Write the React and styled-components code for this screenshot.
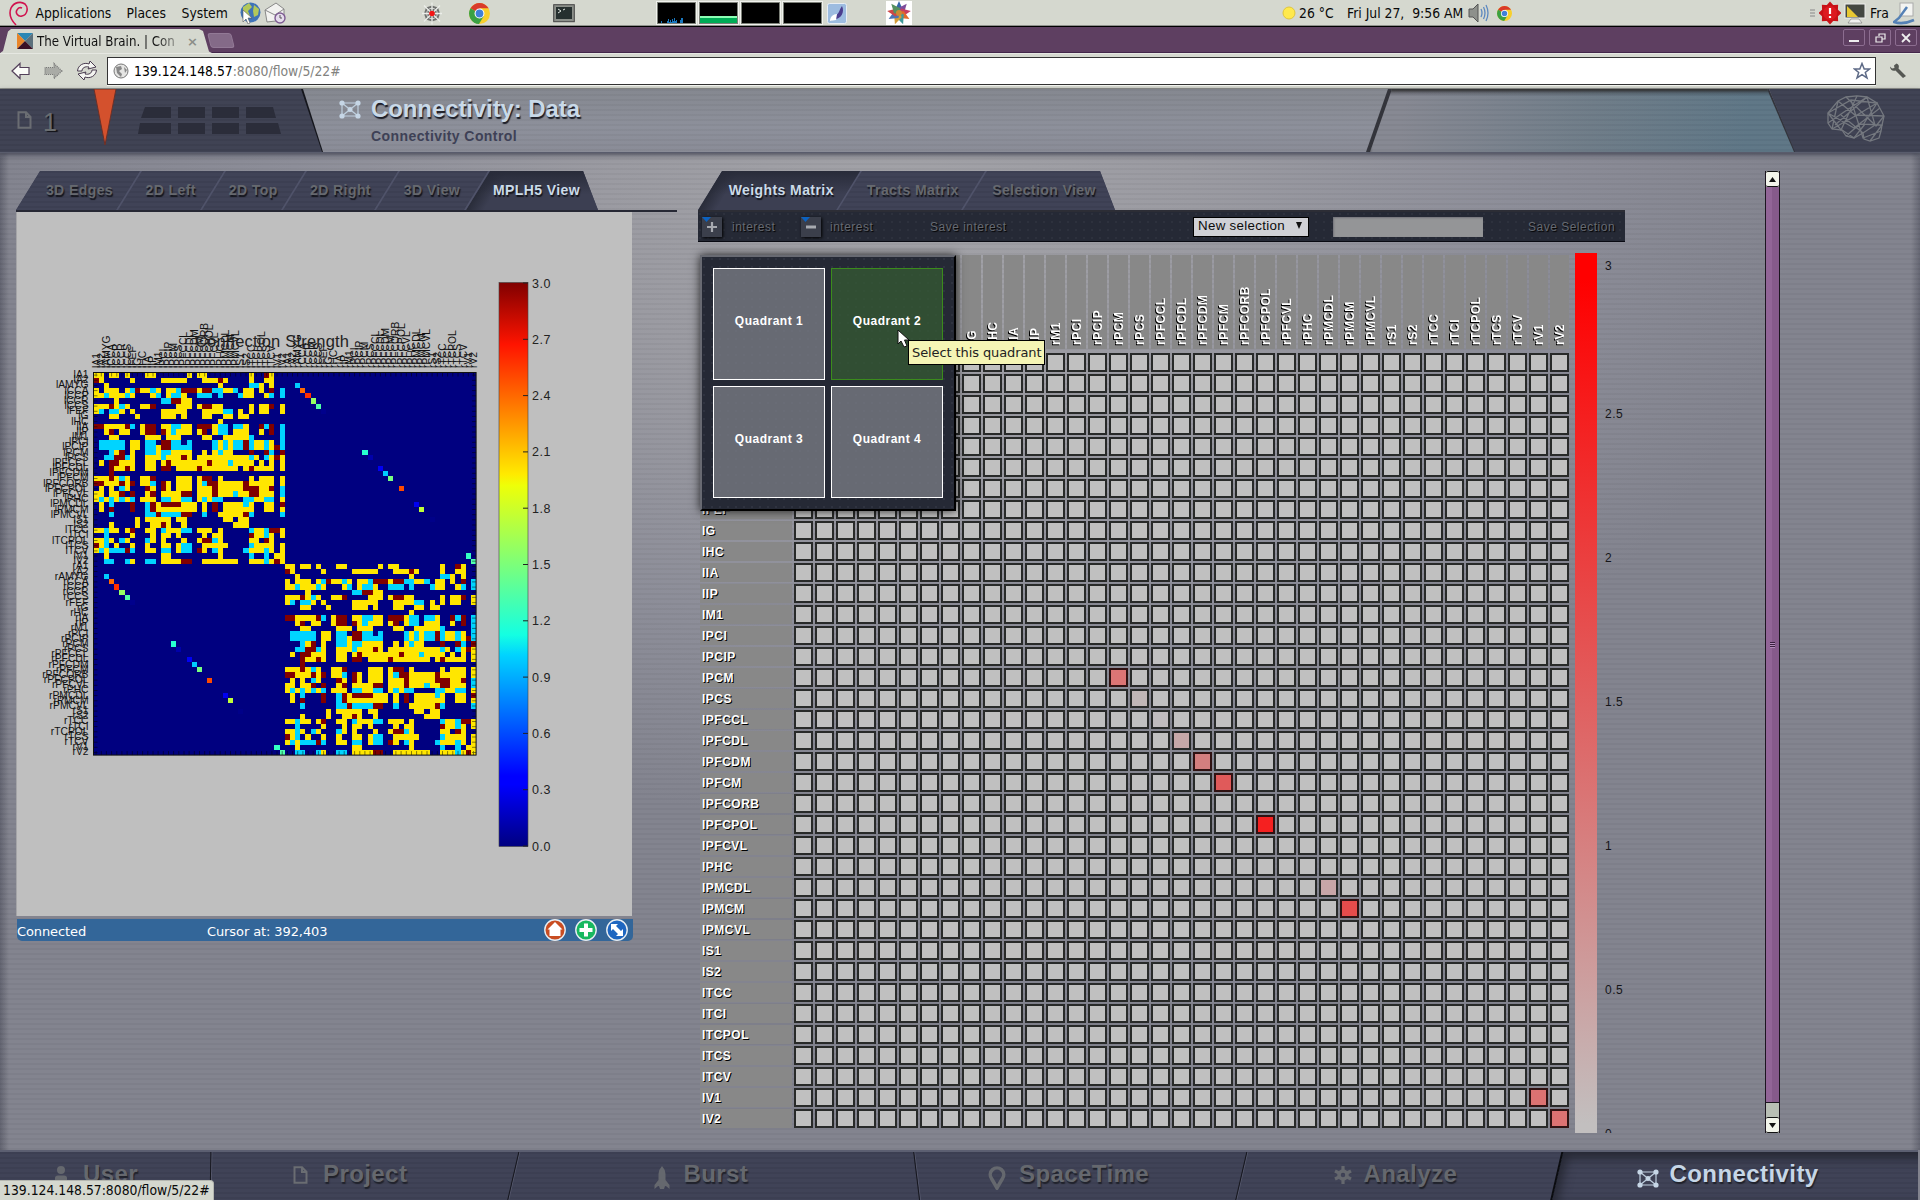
import React from "react";
import styled, { createGlobalStyle, css } from "styled-components";

const Global = createGlobalStyle`
  * { box-sizing: border-box; }
  html, body { margin: 0; padding: 0; background: #82838e; }
  body { width: 1920px; height: 1200px; overflow: hidden; font-family: "Liberation Sans", Arial, sans-serif; }
`;

const SYSTEM_FONT = `"DejaVu Sans Condensed", "DejaVu Sans", sans-serif`;
const SCAN = `repeating-linear-gradient(180deg, rgba(0,0,0,0.03) 0 2px, rgba(255,255,255,0.012) 2px 5px)`;

const Screen = styled.div`
  width: 1920px; height: 1200px; position: relative; overflow: hidden;
  display: flex; flex-direction: column;
`;

/* ---------- desktop panel ---------- */
const Panel = styled.div`
  height: 27px; flex: none; display: flex; align-items: center;
  background: #d5d8cf; border-bottom: 1px solid #000; box-shadow: inset 0 -1px 0 #8f918c;
  font: 13.8px ${SYSTEM_FONT}; font-stretch: condensed; color: #0a0a0a; white-space: pre;
`;
const PanelText = styled.span`
  width: ${(p) => p.$w}px; margin-left: ${(p) => p.$ml || 0}px; flex: none; line-height: 24px;
`;
const Slot = styled.span`
  display: flex; flex: none; margin-left: ${(p) => p.$ml || 0}px;
  width: ${(p) => p.$w}px; height: ${(p) => p.$h || 24}px; align-items: center; justify-content: center;
  background: ${(p) => p.$bg || "transparent"};
`;
const Monitor = styled.span`
  flex: none; width: 39px; height: 22px; margin-left: ${(p) => p.$ml || 3}px; display: flex; align-items: flex-end;
  background: #000; border: 1px solid #7c8078; outline: 1px solid #f1f2ee; outline-offset: 0;
`;
const MemoryBar = styled.span`width: 100%; height: 6px; background: #00ac56; border-top: 1px solid #8dffb4; box-shadow: 0 -1px 0 #8dffb4;`;

/* ---------- browser ---------- */
const TabStrip = styled.div`
  height: 26px; flex: none; display: flex; align-items: flex-end; background: #5e3f61;
  border-bottom: 1px solid #43264a;
`;
const BrowserTab = styled.div`
  width: 212px; height: 24px; padding-left: 17px; margin-bottom: -1px; display: flex; align-items: center; gap: 4px;
  background: #d5d8cf; clip-path: polygon(0 100%, 3px 92%, 8px 10%, 11px 0, 199px 0, 203px 8%, 209px 94%, 212px 100%);
  font: 13.2px ${SYSTEM_FONT}; font-stretch: condensed; color: #111;
`;
const TabTitle = styled.span`
  width: 143px; white-space: nowrap;
  background: linear-gradient(90deg, #111 118px, rgba(17,17,17,.25) 143px); -webkit-background-clip: text; color: transparent;
`;
const TabClose = styled.span`margin-left: 3px; color: #8b8e88; font: bold 13px "DejaVu Sans", sans-serif;`;
const NewTab = styled.div`
  width: 24px; height: 15px; margin: 0 0 4px -3px; background: #846a88; border: 1px solid #927996; border-radius: 3px;
  transform: skewX(14deg);
`;
const WindowButtons = styled.div`display: flex; gap: 4px; margin: 0 3px 6px auto;`;
const WindowButton = styled.div`
  width: 22px; height: 17px; border: 1px solid #8c6d90; border-radius: 2px; display: flex; align-items: center; justify-content: center;
`;
const Toolbar = styled.div`
  height: 36px; flex: none; display: flex; align-items: center; background: #d5d8cf; padding: 0 0 0 10px;
  border-bottom: 1px solid #8e908b; box-shadow: inset 0 1px 0 #e6e8e2;
`;
const UrlBox = styled.div`
  margin-left: 9px; width: 1769px; height: 28px; border: 1px solid #333; background: #fff; box-shadow: 0 1px 0 #f4f5f1;
  display: flex; align-items: center; padding: 0 4px 0 5px; font: 13.8px ${SYSTEM_FONT}; font-stretch: condensed; color: #000;
`;
const UrlText = styled.span`margin-left: 5px; flex: 1;`;
const UrlRest = styled.span`color: #82827e;`;

/* ---------- application header ---------- */
const Header = styled.header`
  height: 64px; flex: none; display: flex; position: relative; z-index: 2;
  background: ${SCAN}, linear-gradient(180deg, #84878f, #8c8f9a 60%, #898b96);
  border-bottom: 1px solid #595c6c; box-shadow: 0 2px 5px rgba(60,62,78,.8);
`;
const HeaderLeft = styled.div`
  width: 323px; height: 63px; padding-left: 17px; display: flex; align-items: flex-start;
  background: ${SCAN}, #3e4152; clip-path: polygon(0 0, 301px 0, 322px 100%, 0 100%);
`;
const HeaderLeftEdge = styled.div`width: 323px; margin-right: 16px; background: #15161c; clip-path: polygon(0 0, 303px 0, 323px 100%, 0 100%);`;
const ProjectNumber = styled.span`
  margin: 19px 0 0 11px; width: 43px; font-size: 25px; line-height: 28px; color: #6a6d70; text-shadow: 2px 1px 1px #101116;
`;
const FileSlot = styled.span`margin-top: 22px; display: flex;`;
const Titles = styled.div`padding: 0 0 0 10px; flex: 1;`;
const Title = styled.h1`
  margin: 5px 0 0; height: 30px; line-height: 30px; font-size: 24px; font-weight: bold; color: #c9d9e8; letter-spacing: -.1px;
  text-shadow: 1px 2px 1px #1c1d26; white-space: nowrap;
`;
const Subtitle = styled.h2`margin: 3px 0 0; font-size: 14px; line-height: 18px; font-weight: bold; letter-spacing: .42px; color: #3e4156;`;
const HeaderIcon = styled.div`padding-top: 11px;`;
const HeaderGradientEdge = styled.div`
  width: 430px; height: 63px; background: #33343b; clip-path: polygon(22px 0, 403px 0, 430px 100%, 0 100%);
`;
const HeaderGradient = styled.div`
  height: 63px; margin-left: 4px; background: ${SCAN}, linear-gradient(180deg, rgba(30,30,36,.55), transparent 7px), linear-gradient(97deg, #868892 8%, #6e7c88 52%, #5e7686 88%);
  clip-path: polygon(22px 0, 397px 0, 424px 100%, 0 100%);
  box-shadow: inset 0 2px 3px #333;
`;
const HeaderRight = styled.div`
  width: 151px; margin-left: -27px; padding: 6px 0 0 58px; background: ${SCAN}, #3e4152;
  clip-path: polygon(0 0, 151px 0, 151px 100%, 26px 100%);
`;

/* ---------- main ---------- */
const Main = styled.main`
  height: 997px; flex: none; display: flex; padding: 18px 0 0 16px;
  background: ${SCAN},
    linear-gradient(90deg, rgba(70,72,86,.55), transparent 9px, transparent 1911px, rgba(70,72,86,.5)),
    radial-gradient(ellipse 1050px 720px at 900px 60px, #a2a2a7 0, #9a9aa1 28%, #8c8d98 58%, #82838e 85%);
`;
const LeftColumn = styled.section`width: 661px; margin-right: 21px; flex: none;`;
const RightColumn = styled.section`width: 1067px; flex: none;`;

const ViewTabs = styled.div`
  display: flex; width: ${(p) => p.$w}px; height: 39px; padding-left: 12px; background: #3e4155;
  clip-path: polygon(24px 0, calc(100% - 15px) 0, 100% 100%, 0 100%);
`;
const ViewTab = styled.div`
  position: relative; z-index: ${(p) => (p.$active ? 1 : 0)}; width: ${(p) => p.$w}px; flex: none; display: flex; align-items: center; justify-content: center;
  padding: 0 0 2px ${(p) => p.$shift}px;
  font-size: 14px; font-weight: bold; letter-spacing: .42px; white-space: nowrap;
  color: ${(p) => (p.$active ? "#cbdbe9" : "#66696f")}; text-shadow: 1px 2px 1px #14151c;
  &::before {
    content: ""; position: absolute; z-index: -1; top: 0; bottom: 0; left: 0; right: ${(p) => (p.$last ? "-30px" : "0")};
    transform: skewX(-31.6deg); border-left: ${(p) => (p.$first ? "0" : "2px solid #50536a")};
    background: ${(p) => p.$active ? "linear-gradient(180deg, #282b39, rgba(40,43,57,0) 60%), linear-gradient(90deg, #292c39, #3c3f52 18px)" : `${SCAN}, #3e4155`};
  }
`;
const TabRule = styled.div`height: 2px; background: #262834;`;

const PlotArea = styled.div`width: 616px; height: 704px; background: #bfbfbf; border-left: 1px solid #a5a5a8;`;
const StatusBar = styled.div`
  width: 616px; height: 22px; margin: 3px 0 0 1px; background: #336699; border-radius: 0 0 5px 5px; color: #fff; display: flex; align-items: center;
  font: 13px "DejaVu Sans", sans-serif; letter-spacing: -.1px;
`;
const StatusText = styled.span`width: ${(p) => p.$w}px; white-space: nowrap; padding-top: 2px;`;
const StatusIcons = styled.div`display: flex; gap: 9px; margin-left: auto; margin-right: 5px;`;

const MatrixToolbar = styled.div`
  width: 927px; height: 32px; display: flex; align-items: center; padding-left: 4px;
  background: radial-gradient(circle at 2px 2px, #2d313d 1px, transparent 1.4px) 0 0 / 8px 8px, #252935;
  border-top: 2px solid #2c2d35; border-bottom: 1px solid #090a12; font-size: 12px; letter-spacing: .5px; color: #666a72; text-shadow: 1px 1px 1px #000;
`;
const SquareButton = styled.div`
  width: 20px; height: 20px; margin-left: ${(p) => p.$ml || 0}px; background: #3b3f4b; box-shadow: 1px 1px 3px #000; display: flex; align-items: center; justify-content: center;
`;
const ToolLabel = styled.span`margin-left: ${(p) => p.$ml}px; width: ${(p) => p.$w}px; white-space: nowrap;`;
const Select = styled.div`
  width: 116px; height: 20px; margin-left: 188px; border: 1px solid #000; background: #d0d1d6; color: #0c0c0c; text-shadow: none;
  padding: 0 5px 2px 4px; display: flex; align-items: center; justify-content: space-between; font-size: 13.33px; letter-spacing: .3px; white-space: nowrap;
`;
const TextInput = styled.div`width: 150px; height: 20px; margin-left: 24px; background: #949597; box-shadow: inset 1px 1px 2px #727379;`;

const MatrixRow = styled.div`display: flex; margin: 11px 0 0 0; height: 880px;`;
const MatrixPanel = styled.div`position: relative; width: 877px; padding: 2px 0 0 2px;`;
const ColumnHeads = styled.div`display: flex; gap: 2px; margin: 0 0 4px 94px;`;
const ColumnHead = styled.div`
  width: 19px; height: 94px; background: #888; writing-mode: vertical-rl; transform: rotate(180deg); padding-top: 4px; line-height: 20px;
  font-size: 12px; font-weight: bold; letter-spacing: .5px; color: #fff; text-shadow: -1px -1px 0 #000; white-space: nowrap;
`;
const Rows = styled.div`display: grid; grid-template-columns: 92px repeat(37, 19px); grid-auto-rows: 19px; gap: 2px;`;
const RowHead = styled.div`
  background: #888; padding-left: 2px; line-height: 20px; font-size: 12px; font-weight: bold; letter-spacing: .5px; color: #fff; text-shadow: 1px 1px 0 #000;
`;
const Cell = styled.div`background: ${(p) => p.$color || "#c0c0c0"}; border: 2px solid ${(p) => (p.$hot ? "#301212" : "#282a29")};`;

const QuadrantPopup = styled.div`
  position: absolute; left: 2px; top: 2px; width: 256px; height: 256px; padding: 11px; display: grid; grid-template-columns: 112px 112px; gap: 6px;
  grid-auto-rows: 112px; background: radial-gradient(circle at 2px 2px, #2f3340 1px, transparent 1.4px) 0 0 / 8px 8px, #252935;
  border: 2px solid #000; border-left-color: #686a72; border-top-color: #686a72; box-shadow: 0 0 9px rgba(0,0,0,.75);
`;
const Quadrant = styled.div`
  border: 1px solid ${(p) => (p.$hover ? "#3b8c1c" : "#fff")}; background: ${(p) => (p.$hover ? "rgba(52,88,51,.78)" : "rgba(120,122,131,.8)")};
  display: flex; align-items: center; justify-content: center; padding-bottom: 7px;
  color: #fff; font-weight: bold; font-size: 12px; letter-spacing: .5px;
`;
const Tooltip = styled.div`
  position: absolute; left: 210px; top: 87px; width: 137px; height: 25px; border: 1px solid #000; background: #f5f5b5; color: #222;
  font: 13px "DejaVu Sans", sans-serif; letter-spacing: -.1px; line-height: 23px; padding-left: 3px; white-space: nowrap;
`;
const Pointer = styled.svg`position: absolute; left: 199px; top: 76px;`;

const RedBar = styled.div`width: 22px; height: 880px; background: linear-gradient(180deg, #f00 3%, #c2bfbf 99%);`;
const RedScale = styled.div`
  width: 60px; padding: 5px 0 0 8px; overflow: hidden; font-size: 12px; letter-spacing: .5px; color: #151519; height: 880px;
`;
const RedTick = styled.div`height: 144px; line-height: 16px; &:first-child { height: 148px; }`;

const PageScroll = styled.div`
  width: 15px; height: 962px; flex: none; display: flex; flex-direction: column;
  border-left: 1px solid #1c1520; border-right: 1px solid #1c1520; background: #b9bfb5;
`;
const ScrollButton = styled.div`height: 16px; background: #f2f4ea; border: 1px solid #111; border-width: 1px 0; border-radius: 2px; display: flex; align-items: center; justify-content: center;`;
const Thumb = styled.div`
  height: 916px; background: linear-gradient(90deg, #926597 50%, #865a8b 50%); border-bottom: 1px solid #1c1520; display: flex; align-items: center; justify-content: center;
`;
const Grip = styled.div`width: 5px; height: 6px; background: repeating-linear-gradient(180deg, #3a203f 0 1px, #b48cba 1px 2px);`;

/* ---------- footer ---------- */
const Footer = styled.footer`
  height: 50px; width: 1918px; flex: none; display: flex; overflow: hidden; background: ${SCAN}, #3e4155; border-top: 2px solid #5c5f71;
`;
const FooterTab = styled.div`
  position: relative; z-index: 0; width: ${(p) => p.$w}px; flex: none; padding-left: ${(p) => p.$pl}px; display: flex; align-items: flex-start;
  font-weight: bold; font-size: 24px; letter-spacing: .42px; line-height: 28px;
  color: ${(p) => (p.$active ? "#c6d6e6" : "#65686e")}; text-shadow: 1px 2px 1px #20222b;
  &::before {
    content: ""; position: absolute; z-index: -1; top: -2px; bottom: 0; left: 0; right: -20px; transform: skewX(${(p) => p.$skew}deg);
    border-left: 1px solid #15161d; box-shadow: inset 1px 0 0 #53566a;
    ${(p) => p.$first && css`border: 0; box-shadow: none;`}
    ${(p) => p.$active && css`border-top: 2px solid #0b0c10; border-left: 2px solid #0b0c10; box-shadow: inset 5px 6px 10px #252732; background: ${SCAN}, #3e4155;`}
  }
`;
const FooterIcon = styled.span`display: flex; width: ${(p) => p.$w}px; margin-top: ${(p) => p.$mt || 14}px; flex: none;`;
const FooterText = styled.span`margin-top: 8px;`;
const UrlHint = styled.div`
  position: absolute; z-index: 5; left: 0; bottom: 0; width: 214px; height: 20px; background: #d5d8cf; border-top: 1px solid #b4b6b0; border-right: 1px solid #b4b6b0; border-radius: 0 4px 0 0;
  padding-left: 3px; font: 13.8px/18px ${SYSTEM_FONT}; font-stretch: condensed; color: #0a0a0a; white-space: nowrap;
`;

/* ---------- data ---------- */
const REGIONS = ["A1", "A2", "AMYG", "CCA", "CCP", "CCR", "CCS", "FEF", "G", "HC", "IA", "IP", "M1", "PCI", "PCIP", "PCM", "PCS", "PFCCL", "PFCDL", "PFCDM", "PFCM", "PFCORB", "PFCPOL", "PFCVL", "PHC", "PMCDL", "PMCM", "PMCVL", "S1", "S2", "TCC", "TCI", "TCPOL", "TCS", "TCV", "V1", "V2"];

const HOT = {
  "15-15": ["#dc7575", 1], "16-16": ["#c0b6b6", 0], "17-17": ["#c0bcbe", 0], "18-18": ["#c6a8a8", 0], "19-19": ["#d37f7f", 1],
  "20-20": ["#e05a5a", 1], "22-22": ["#f52020", 1], "25-25": ["#c8a6a8", 0], "26-26": ["#e64c4c", 1], "35-35": ["#dc7272", 1], "36-36": ["#dc7272", 1],
};

// run-length rows of one hemisphere: Y = 2.0, C = 1.0, R = 3.0
const HEMI = [
  "Y0-1 Y3-4 Y6 Y10-11 Y18 Y20-21 Y30 R33 Y34",
  "R0 Y1 Y7 Y13-17 Y21-23 R24 Y25 Y30 Y33-34",
  "Y2 Y24 C30-31 Y32 Y34",
  "Y0 Y2-4 Y6 C7 R8 Y9-10 C11 Y12 Y14-15 C16 R17-19 Y20 R21-22 C23-24 Y25-26 C27 Y29-30 Y32 R34 C36",
  "Y0-1 C2 Y3-5 C6 Y7 Y11 C12 Y14 C15-16 Y17 C20-22 C24 C28 Y29-30 Y33 C34 C36",
  "Y4 C13-14 R15-16 Y17-18",
  "Y0-2 R3 Y4 C5 Y6 Y9-10 R11 Y16-18 Y20 R21-22 Y23-24 Y30 Y32-33 R34 Y36",
  "Y0 C1 C3-4 Y5 Y7 Y13-17 Y21-24 C25-26 Y28 Y30 Y32-33 Y36",
  "Y3-4 Y8 Y13-15 Y17 Y21-22 Y25-26 Y28-29",
  "Y24",
  "R0-1 Y2-5 R6 C7 Y9 R10-11 Y13-14 C15-16 Y17-18 R20-22 Y23 C24-25 C27-28 Y29 R32 C33 R34 C36",
  "Y2 R3 Y5-6 Y9 R10-11 R13 Y14 C15 Y16-18 Y20 R21 Y23 C24-25 Y27-29 Y32 R34 C36",
  "Y3-4 Y10-12 Y14-16 Y21-22 Y25-29 C30 C36",
  "C1-5 Y7-8 C10-11 R13-14 C15-16 C18 C23 Y24 C25 Y26 C27-28 R29 C30 Y31-32 C33 Y34 C36",
  "C1-5 Y7-8 C10-11 Y12 R13-14 C15-18 C23 Y24 C25 Y26 C27-28 R29 C30 Y31-32 C33 Y34 R35 C36",
  "C3 Y4 R5 Y7 C10-11 Y12 C13-14 Y15-18 Y21 Y23 C24 Y25-26 R30 R33 C34 R36",
  "C2-3 R4-5 C6 Y7 Y10-12 C13 Y14-16 R17 Y18 Y20-29 C30 Y31 C33 Y34 R35 Y36",
  "Y1 R3-4 Y5-7 Y10-11 Y13 R14 Y15-21 R22 Y23-25 C26 Y27-30 Y32 Y34 Y36",
  "R3 Y4-5 R6 Y7 Y10-11 R13-14 Y16-19 R20 Y21-27 Y29 R30 Y31-34 Y36",
  "R3",
  "Y0-2 R3 Y4 C5 Y6 Y9-10 R11 Y16-18 Y20 R21-22 Y24 Y30 Y32-34 Y36",
  "R0-1 Y2-4 R5 Y6 R7 Y9-10 C11 R13 Y14 Y16-18 Y20 C21 R22-23 Y24-28 R29 Y30-34 Y36",
  "Y1 Y3 C5 Y6 R10 Y11 R13 Y14 Y16-18 Y20-22 R23 Y24-28 R29-31 Y32-33 R34 C36",
  "Y0-1 Y3-4 R5 R7 Y10 R11 Y13-16 R17-18 Y20-22 R23 Y24-26 C27 Y28-29 R30-31 Y32-34 C36",
  "Y0 C1 Y2 C3 Y4 C5 Y6 C7 Y9-11 C13-14 Y15-16 C17-18 Y20 C21 Y22 C23-24 C29-30 Y31-32 C33-34 Y36",
  "Y1 C3 R7 C10 R11 Y12 R13-16 Y17-19 Y21 R23 Y25-28 C29 Y30 Y33-34 R36",
  "Y1 R3 R7 C10 R11 Y12-19 Y21 R23 Y25-30 Y33-34 Y36",
  "C3 C10-11 R12 C13-16 R17-18 C21 Y24-28 R29 C30 C36",
  "Y8 Y10-14 Y16-17 Y25-26 Y28-29",
  "Y3 Y8 Y11-12 R13 Y14 Y17 Y27-29",
  "Y0-1 C2 Y3-4 Y6 R7 Y10-11 C13 Y14-16 C17-18 Y20-22 Y24 C30 Y31-32 C33 R34-35 Y36",
  "C2 Y7 Y11 Y13-14 Y16 Y21 Y23-24 R30 Y31-32 C33 Y34 Y36",
  "Y0-1 C2 Y3 C5 Y6 C10 Y11 Y13 Y17 Y20 R21-22 C23 Y24 Y30-31 R33 Y34",
  "R0 Y1 C2 Y4 Y7 Y10 Y13-14 Y16 C17-18 Y21-25 C30 Y31-34 Y36",
  "Y0 C1 Y2 C3-5 R6 C7 Y10-11 C13-14 Y16 C17-18 R20 Y21 C23 Y24 C29 Y30-32 C33 Y34 Y36",
  "Y2 Y13-14 Y24 C30 C33 Y35-36",
  "C2-3 C6 Y7 C10-11 Y13-16 R17-18 Y21-27 Y30-32 C33 Y34 R35 Y36",
];
const CROSS = [[2, "#00ccff"], [3, "#ff6a00"], [4, "#ff2e00"], [5, "#96ff62"], [6, "#50ffa6"], [7, "#00008c"], [15, "#28ffd0"], [16, "#0000aa"], [18, "#0000f4"], [19, "#00ccff"], [20, "#78ff80"], [22, "#ff4a00"], [25, "#0000f0"], [26, "#c0ff38"], [28, "#000089"], [35, "#34ffc4"], [36, "#50ffb0"]];
const X0 = 93.5, Y0 = 372.5, S = 5.17;

function hemiPath(kind, off) {
  let d = "";
  HEMI.forEach((row, r) => {
    row.split(" ").forEach((run) => {
      if (run[0] !== kind) return;
      const [a, b] = run.slice(1).split("-").map(Number);
      const len = ((b === undefined ? a : b) - a + 1) * S;
      d += `M${(X0 + (a + off) * S).toFixed(2)} ${(Y0 + (r + off) * S).toFixed(2)}h${len.toFixed(2)}v${S}h${-len.toFixed(2)}z`;
    });
  });
  return d;
}
const LABELS = [...REGIONS.map((r) => "l" + r), ...REGIONS.map((r) => "r" + r)];
const COLORS = { Y: "#ffe600", C: "#00d4ff", R: "#800000" };
const SPAN = 74 * S;

function Plot() {
  let ticks = "";
  for (let i = 0; i < 74; i++) {
    const x = (X0 + (i + 0.5) * S).toFixed(1), y = (Y0 + (i + 0.5) * S).toFixed(1);
    ticks += `M${x} ${Y0}v4M${x} ${Y0 + SPAN}v-4M${X0} ${y}h4M${X0 + SPAN} ${y}h-4`;
  }
  return (
    <svg width="615" height="704" viewBox="17 212 615 704" fontFamily="Liberation Sans, sans-serif">
      <defs>
        <linearGradient id="jet" x1="0" y1="1" x2="0" y2="0">
          <stop offset="0" stopColor="#000080" /><stop offset=".11" stopColor="#0000ff" /><stop offset=".125" stopColor="#0000ff" />
          <stop offset=".34" stopColor="#00d4ff" /><stop offset=".375" stopColor="#14ffe2" /><stop offset=".5" stopColor="#7cff7a" /><stop offset=".64" stopColor="#eeff08" />
          <stop offset=".66" stopColor="#ffea00" /><stop offset=".89" stopColor="#ff1400" /><stop offset="1" stopColor="#800000" />
        </linearGradient>
      </defs>
      <rect x={X0} y={Y0} width={SPAN} height={SPAN} fill="#000080" />
      {["Y", "C", "R"].map((k) => <path key={k} d={hemiPath(k, 0) + hemiPath(k, 37)} fill={COLORS[k]} shapeRendering="crispEdges" />)}
      {CROSS.map(([i, c]) => (
        <g key={i} fill={c} shapeRendering="crispEdges">
          <rect x={X0 + (37 + i) * S} y={Y0 + i * S} width={S} height={S} />
          <rect x={X0 + i * S} y={Y0 + (37 + i) * S} width={S} height={S} />
        </g>
      ))}
      <path d={ticks} stroke="#000" strokeWidth=".8" opacity=".6" />
      <rect x={X0} y={Y0} width={SPAN} height={SPAN} fill="none" stroke="#111" />
      <g fontSize="10.3" fill="#111">
        {LABELS.map((t, i) => <text key={t} x="88.5" y={Y0 + (i + 0.5) * S + 3} textAnchor="end">{t}</text>)}
        {LABELS.map((t, i) => <text key={t} transform={`translate(${X0 + (i + 0.5) * S + 3.5} 368) rotate(-90)`}>{t}</text>)}
      </g>
      <text x="195" y="347" fontSize="16.5" textLength="154" fill="#222">Connection Strength</text>
      <rect x="499" y="282.5" width="29" height="564" fill="url(#jet)" stroke="#444" strokeWidth=".6" />
      {["3.0", "2.7", "2.4", "2.1", "1.8", "1.5", "1.2", "0.9", "0.6", "0.3", "0.0"].map((t, i) => (
        <g key={t}>
          <path d={`M523 ${283 + i * 56.3}h5`} stroke="#222" />
          <text x="532" y={287.5 + i * 56.3} fontSize="12.5" textLength="18.5" fill="#222">{t}</text>
        </g>
      ))}
    </svg>
  );
}

/* ---------- icons ---------- */
const NetIcon = ({ w = 22, h = 19 }) => (
  <svg width={w} height={h} viewBox="0 0 22 19" fill="none" stroke="#bfd0df" strokeWidth="1.2">
    <path d="M3 3H19V16H3ZM3 3L19 16M19 3L3 16" />
    <g fill="#c6d6e6" stroke="none"><circle cx="3" cy="3" r="2.6" /><circle cx="19" cy="3" r="2.6" /><circle cx="3" cy="16" r="2.6" /><circle cx="19" cy="16" r="2.6" /><circle cx="11" cy="9.5" r="2.5" /></g>
  </svg>
);
const FileIcon = () => (
  <svg width="15" height="18" viewBox="0 0 15 18" fill="none" stroke="#6a6d72" strokeWidth="2"><path d="M1.5 1.2H9L13.5 6V16.8H1.5ZM9 1.2V6H13.5" /></svg>
);
const Chrome = ({ s }) => (
  <svg width={s} height={s} viewBox="0 0 20 20">
    <circle cx="10" cy="10" r="10" fill="#f7cf2c" /><path d="M10 10L1.4 5A10 10 0 0 1 18.7 5H10Z" fill="#d93a2b" /><path d="M10 10L1.4 5A10 10 0 0 0 9.5 20L14 12.5Z" fill="#3aa144" />
    <circle cx="10" cy="10" r="4.7" fill="#fff" /><circle cx="10" cy="10" r="3.7" fill="#3f80d8" />
  </svg>
);
const Arrow = ({ flip }) => (
  <svg width="20" height="18" viewBox="0 0 20 18" transform={flip ? "scale(-1 1)" : undefined}>
    <path d="M1 9L9 1.5V5.5H18V12.5H9V16.5Z" fill={flip ? "#a9aba6" : "#fbfcf8"} stroke={flip ? "#777" : "#53405a"} strokeWidth="1.2" strokeDasharray={flip ? "1 1" : undefined} />
  </svg>
);
const Brain = () => (
  <svg width="58" height="48" viewBox="0 0 58 48" fill="none" stroke="#74787f" strokeWidth="1.3">
    <path d="M11 6L19 2L30 0.8L40 2L50 8L57 21L55 30L54 36L52 43L43 46L37 44L36 38L27 43L19 41L15 35L5 34L1 28V18Z" />
    <path d="M11 6L28 20L57 21M11 6L5 34M1 18L24 5L50 8L36 30M19 2L49 31L57 21M30 1L14 35L1 18L27 33L53 13M40 2L8 30M40 2L48 30L36 38L14 20M24 5L36 43L54 36M19 41L33 29L55 30L43 46M15 35L27 43L38 29M50 8L30 20L5 34M1 28L17 17L40 2" />
  </svg>
);
const StatusIcon = ({ kind }) => {
  const color = { home: "#c94d22", plus: "#18b860", zoom: "#1e66c0" }[kind];
  const d = { home: "M11 3L18.500 10.500H16.500V17H5.500V10.500H3.500Z", plus: "M9 4.5H13V9H17.5V13H13V17.5H9V13H4.5V9H9Z", zoom: "M5 5H12L10 7L15 12L17 10V17H10L12 15L7 10L5 12Z" }[kind];
  return <svg width="22" height="22" viewBox="0 0 22 22"><circle cx="11" cy="11" r="10.2" fill={color} stroke="#e9eef2" strokeWidth="1.4" /><path d={d} fill="#fff" /></svg>;
};

const LEFT_TABS = [["3D Edges", 100, 3], ["2D Left", 83.5, 2], ["2D Top", 81.5, 2], ["2D Right", 93, 2], ["3D View", 90, 2], ["MPLH5 View", 119, 2]];
const RIGHT_TABS = [["Weights Matrix", 137.5, 5], ["Tracts Matrix", 125.5, 5], ["Selection View", 126, 16]];

const DesktopPanel = () => (
  <Panel>
    <Slot $ml={9} $w={20}><svg width="20" height="25" viewBox="0 0 20 25" fill="none" stroke="#d0134f"><path d="M7 24C1 18 0 12 2 7C5 1 12 0 16 3C20 7 18 14 13 15C9 16 6 12 8 9C9 7 11 6 13 7" strokeWidth="1.6" /></svg></Slot>
    <PanelText $ml={6.5} $w={91}>Applications</PanelText>
    <PanelText $w={55}>Places</PanelText>
    <PanelText $w={58.5}>System</PanelText>
    <Slot $w={21}><svg width="21" height="22" viewBox="0 0 21 22"><circle cx="10.5" cy="10.5" r="10" fill="#3f73b8" /><path d="M3 5L9 1L12 5L8 9L10 14L6 17L3 11ZM14 3L19 7L18 13L14 15L13 9Z" fill="#b3c85a" /><path d="M3 8V20L6 17L8 22L10 21L8 16L12 16Z" fill="#fff" stroke="#555" strokeWidth=".6" /></svg></Slot>
    <Slot $ml={3} $w={22}><svg width="22" height="22" viewBox="0 0 22 22"><path d="M1 8L12 1L20 7V18L3 20Z" fill="#f2f2f0" stroke="#888" /><path d="M1 8L11 13L20 7" fill="none" stroke="#888" /><circle cx="16" cy="16" r="5" fill="#e5dcec" stroke="#7d5a92" strokeWidth="1.4" /><path d="M16 13V16H18" stroke="#555" fill="none" /></svg></Slot>
    <Slot $ml={135} $w={22}><svg width="22" height="23" viewBox="-11 -11.5 22 23"><path d="M0 -8L6 -6L8 0L6 6L0 8L-6 6L-8 0L-6 -6Z" fill="#6f716f" /><g stroke="#eceeea" strokeWidth="1.3" fill="none"><path d="M0 -11V11M-10 0H10M-8 -8L8 8M8 -8L-8 8" /><circle r="5.300" strokeWidth=".8" /></g><circle r="2.800" fill="#f21515" /></svg></Slot>
    <Slot $ml={26} $w={21}><Chrome s={21} /></Slot>
    <Slot $ml={63} $w={22}><svg width="22" height="19" viewBox="0 0 22 19"><rect x=".7" y=".7" width="20.6" height="17" fill="#8c908a" stroke="#444" /><rect x="3" y="3" width="16" height="12" fill="#26302f" /><path d="M5 5L8 7L5 9M10 6L12 5" stroke="#dfe5df" fill="none" /></svg></Slot>
    <Monitor $ml={82}><svg width="37" height="20"><path d="M3 20V18H4V20M9 20V18H10V16H11V19H12V17H13V19H14V16H15V18H16V15H17V18H18V17H19V20M22 20V17H23V15H25V20" fill="#1878c0" /></svg></Monitor>
    <Monitor><MemoryBar /></Monitor><Monitor /><Monitor />
    <Slot $ml={5} $w={20}><svg width="20" height="21" viewBox="0 0 20 21"><rect x=".5" y=".5" width="19" height="20" rx="2" fill="#9dbce0" stroke="#e9eef3" /><path d="M15 3C18 9 14 16 8 16L3 18L7 13C12 12 12 7 15 3Z" fill="#4b3d8e" /><path d="M3 18C3 14 6 11 10 11L9 17Z" fill="#fff" /></svg></Slot>
    <Slot $ml={39} $w={26} $bg="#fff"><svg width="24" height="24" viewBox="-12 -12 24 24">{["#3367a8", "#7d4d9b", "#c83e62", "#e06a2a", "#3f9a9a", "#d49b38", "#4d73b3", "#ce4747", "#55915f"].map((c, i) => <path key={i} d="M-4 -3L0 -12L4 -3L0 1Z" fill={c} transform={`rotate(${i * 40})`} />)}<circle r="3" fill="#cc8b34" /></svg></Slot>
    <Slot $ml={369} $w={16}><svg width="14" height="14"><circle cx="7" cy="7" r="6" fill="#ffe94d" stroke="#e0c63c" /></svg></Slot>
    <PanelText $ml={2} $w={48}>26 °C</PanelText>
    <PanelText $w={120}>Fri Jul 27,  9:56 AM</PanelText>
    <Slot $w={23}><svg width="22" height="20" viewBox="0 0 22 20" fill="none"><path d="M1 6H5L10 1V19L5 14H1Z" fill="#8e918c" stroke="#555" /><path d="M13 6Q15 10 13 14M15.500 4Q18.500 10 15.500 16M18 2Q22 10 18 18" stroke="#5c88c0" strokeWidth="1.300" /></svg></Slot>
    <Slot $ml={7} $w={15}><Chrome s={15} /></Slot>
    <Slot $ml={298} $w={5}><svg width="5" height="9"><path d="M0 1H5M0 4H5M0 7H5" stroke="#888" /></svg></Slot>
    <Slot $ml={4} $w={22}><svg width="22" height="24" viewBox="-11 -12 22 24">{[0, 45, 90, 135, 180, 225, 270, 315].map((a) => <path key={a} d="M-5 -6L0 -11.500L5 -6L0 0Z" fill="#c81218" transform={`rotate(${a})`} />)}<circle r="7" fill="#dd1a20" /><path d="M0 -5V1M0 3V5" stroke="#fff" strokeWidth="2.200" /></svg></Slot>
    <Slot $ml={3} $w={22}><svg width="22" height="21" viewBox="0 0 22 21"><rect x="1" y="1" width="20" height="14" fill="#444842" stroke="#eee" /><path d="M3 3V14H14Z" fill="#e8c832" /><path d="M7 16H15L18 20H4Z" fill="#f2f2f0" stroke="#777" strokeWidth=".6" /></svg></Slot>
    <PanelText $ml={4} $w={22}>Fra</PanelText>
    <Slot $ml={1} $w={22}><svg width="22" height="23" viewBox="0 0 22 23" fill="none"><rect x="7" y="1" width="13" height="13" fill="#f3f4f1" stroke="#aaa" /><path d="M14 5L6 16L1 20Q10 23 21 18" stroke="#5581b5" strokeWidth="2.500" /></svg></Slot>
  </Panel>
);

const Browser = () => (
  <>
    <TabStrip>
      <BrowserTab>
        <svg width="16" height="16"><path d="M0 0H16L8 8Z" fill="#2b87b5" /><path d="M0 0L8 8L0 16Z" fill="#e8852a" /><path d="M16 0L8 8L16 16Z" fill="#5b707c" /><path d="M0 16H16L8 8Z" fill="#3a1026" /></svg>
        <TabTitle>The Virtual Brain. | Con</TabTitle><TabClose>×</TabClose>
      </BrowserTab>
      <NewTab />
      <WindowButtons>
        <WindowButton><svg width="12" height="10"><path d="M1 8H11" stroke="#eee" strokeWidth="2" /></svg></WindowButton>
        <WindowButton><svg width="11" height="10" fill="none" stroke="#eee" strokeWidth="1.2"><path d="M4 3V1H10V6H7M1 4H7V9H1Z" /></svg></WindowButton>
        <WindowButton><svg width="10" height="10"><path d="M1 1L9 9M9 1L1 9" stroke="#eee" strokeWidth="1.8" /></svg></WindowButton>
      </WindowButtons>
    </TabStrip>
    <Toolbar>
      <Slot $w={21}><Arrow /></Slot><Slot $ml={11} $w={21}><Arrow flip /></Slot>
      <Slot $ml={12} $w={23}><svg width="22" height="21" viewBox="0 0 22 21" fill="none"><path d="M1.500 11C2 5 8 2 13 4L14 1L20 7L12 9L13 7C9 6 6 8 6 11ZM20.500 10C20 16 14 19 9 17L8 20L2 14L10 12L9 14C13 15 16 13 16 10Z" fill="#f4f5f1" stroke="#4a3c50" /></svg></Slot>
      <UrlBox>
        <svg width="16" height="16"><circle cx="8" cy="8" r="7" fill="#e5e5e3" stroke="#777" /><path d="M3 4L8 3L9 6L6 8L9 11L8 14L4 10ZM11 4L14 7L12 10Z" fill="#888" /></svg>
        <UrlText>139.124.148.57<UrlRest>:8080/flow/5/22#</UrlRest></UrlText>
        <svg width="18" height="18" viewBox="0 0 18 18"><path d="M9 1.500L11.200 7H16.500L12.300 10.500L14 16L9 12.700L4 16L5.700 10.500L1.500 7H6.800Z" fill="#fff" stroke="#5d6a86" strokeWidth="1.500" /></svg>
      </UrlBox>
      <Slot $ml={13} $w={18}><svg width="18" height="17" viewBox="0 0 18 17"><path d="M7.500 1.500L5 3.500L5.500 6L3 6.500L1 4.500C1 8 4 9.500 6.500 8.500L14 16L17 14L9.500 6.500C10.500 4 9.500 2 7.500 1.500Z" fill="#555753" /></svg></Slot>
    </Toolbar>
  </>
);

const AppHeader = () => (
  <Header>
    <HeaderLeftEdge>
      <HeaderLeft>
        <FileSlot><FileIcon /></FileSlot>
        <ProjectNumber>1</ProjectNumber>
        <svg width="198" height="60" viewBox="86 89 198 60">
          <path d="M94 89H116L105 145Z" fill="#d4512d" stroke="#6d3128" strokeWidth="1" />
          <path d="M145 107H171V118H141ZM178 107H205V118H178ZM212 107H239V118H212ZM246 107H273L276 118H246ZM140 123H171V134H138ZM178 123H205V134H178ZM212 123H239V134H212ZM246 123H278L281 134H246Z" fill="#2b2d3a" />
        </svg>
      </HeaderLeft>
    </HeaderLeftEdge>
    <HeaderIcon><NetIcon /></HeaderIcon>
    <Titles><Title>Connectivity: Data</Title><Subtitle>Connectivity Control</Subtitle></Titles>
    <HeaderGradientEdge><HeaderGradient /></HeaderGradientEdge>
    <HeaderRight><Brain /></HeaderRight>
  </Header>
);

const Tabs = ({ items, active, width }) => (
  <ViewTabs $w={width}>
    {items.map(([label, w, shift], i) => <ViewTab key={label} $w={w} $shift={shift} $first={i === 0} $last={i === items.length - 1} $active={i === active}>{label}</ViewTab>)}
  </ViewTabs>
);

const Matrix = () => (
  <MatrixPanel>
    <ColumnHeads>{REGIONS.map((r) => <ColumnHead key={r}>r{r}</ColumnHead>)}</ColumnHeads>
    <Rows>
      {REGIONS.map((r, y) => (
        <React.Fragment key={r}>
          <RowHead>l{r}</RowHead>
          {REGIONS.map((c, x) => { const hot = HOT[`${y}-${x}`]; return <Cell key={c} $color={hot && hot[0]} $hot={hot && hot[1]} />; })}
        </React.Fragment>
      ))}
    </Rows>
    <QuadrantPopup>
      <Quadrant>Quadrant 1</Quadrant><Quadrant $hover>Quadrant 2</Quadrant><Quadrant>Quadrant 3</Quadrant><Quadrant>Quadrant 4</Quadrant>
    </QuadrantPopup>
    <Tooltip>Select this quadrant</Tooltip>
    <Pointer width="14" height="20" viewBox="0 0 14 20"><path d="M1 1V15L4 12L7 18L10 17L7.500 11H12Z" fill="#fff" stroke="#111" /></Pointer>
  </MatrixPanel>
);

export default function App() {
  return (
    <Screen>
      <Global />
      <DesktopPanel />
      <Browser />
      <AppHeader />
      <Main>
        <LeftColumn>
          <Tabs items={LEFT_TABS} active={5} width={582} />
          <TabRule />
          <PlotArea><Plot /></PlotArea>
          <StatusBar>
            <StatusText $w={190}>Connected</StatusText><StatusText $w={130}>Cursor at: 392,403</StatusText>
            <StatusIcons><StatusIcon kind="home" /><StatusIcon kind="plus" /><StatusIcon kind="zoom" /></StatusIcons>
          </StatusBar>
        </LeftColumn>
        <RightColumn>
          <Tabs items={RIGHT_TABS} active={0} width={417} />
          <MatrixToolbar>
            <SquareButton><svg width="20" height="20"><path d="M0 0H9L4.500 5Z" fill="#0c62c0" /><path d="M10 5V15M5 10H15" stroke="#a7aab0" strokeWidth="2.200" /></svg></SquareButton>
            <ToolLabel $ml={10} $w={44}>interest</ToolLabel>
            <SquareButton $ml={25}><svg width="20" height="20"><path d="M0 0H9L4.500 5Z" fill="#0c62c0" /><path d="M5 10H15" stroke="#a7aab0" strokeWidth="3" /></svg></SquareButton>
            <ToolLabel $ml={9} $w={44}>interest</ToolLabel>
            <ToolLabel $ml={56} $w={75}>Save interest</ToolLabel>
            <Select>New selection<svg width="8" height="8"><path d="M1 0H7L4 7Z" fill="#111" /></svg></Select>
            <TextInput />
            <ToolLabel $ml={45} $w={90}>Save Selection</ToolLabel>
          </MatrixToolbar>
          <MatrixRow>
            <Matrix />
            <RedBar />
            <RedScale>{["3", "2.5", "2", "1.5", "1", "0.5", "0"].map((t) => <RedTick key={t}>{t}</RedTick>)}</RedScale>
          </MatrixRow>
        </RightColumn>
        <PageScroll>
          <ScrollButton><svg width="7" height="5"><path d="M0 5H7L3.500 0Z" fill="#111" /></svg></ScrollButton>
          <Thumb><Grip /></Thumb>
          <Slot $w={13} $h={14} />
          <ScrollButton><svg width="7" height="5"><path d="M0 0H7L3.500 5Z" fill="#111" /></svg></ScrollButton>
        </PageScroll>
      </Main>
      <Footer>
        <FooterTab $w={209.5} $pl={55} $skew={-1} $first>
          <FooterIcon $w={28}><svg width="12" height="20" fill="#65686e"><circle cx="6" cy="4" r="4" /><path d="M0 20V12Q0 9.500 3 9.500H9Q12 9.500 12 12V20Z" /></svg></FooterIcon><FooterText>User</FooterText>
        </FooterTab>
        <FooterTab $w={303} $pl={83.5} $skew={-1}><FooterIcon $w={30}><FileIcon /></FooterIcon><FooterText>Project</FooterText></FooterTab>
        <FooterTab $w={403.5} $pl={141} $skew={-13}>
          <FooterIcon $w={30}><svg width="16" height="24" fill="#65686e"><path d="M8 0Q11 3 11.500 8V14L15.500 19V23L12 20H11L10 23H6L5 20H4L0.500 23V19L4.500 14V8Q5 3 8 0Z" /></svg></FooterIcon><FooterText>Burst</FooterText>
        </FooterTab>
        <FooterTab $w={324.5} $pl={72} $skew={7}>
          <FooterIcon $w={31}><svg width="18" height="24" fill="none" stroke="#65686e" strokeWidth="3.500"><path d="M9 22L3.500 12.500A6.700 6.700 0 1 1 14.500 12.500Z" /></svg></FooterIcon><FooterText>SpaceTime</FooterText>
        </FooterTab>
        <FooterTab $w={315} $pl={93} $skew={-13}>
          <FooterIcon $w={30}><svg width="18" height="18" viewBox="-9 -9 18 18" stroke="#65686e" fill="none"><circle r="4" strokeWidth="3.500" /><path d="M0 -9V-5M0 9V5M-8 -4L-4 -2M8 4L4 2M8 -4L4 -2M-8 4L-4 2" strokeWidth="3.200" /></svg></FooterIcon><FooterText>Analyze</FooterText>
        </FooterTab>
        <FooterTab $w={363} $pl={81} $skew={-13} $active><FooterIcon $w={33} $mt={17}><NetIcon /></FooterIcon><FooterText>Connectivity</FooterText></FooterTab>
      </Footer>
      <UrlHint>139.124.148.57:8080/flow/5/22#</UrlHint>
    </Screen>
  );
}
